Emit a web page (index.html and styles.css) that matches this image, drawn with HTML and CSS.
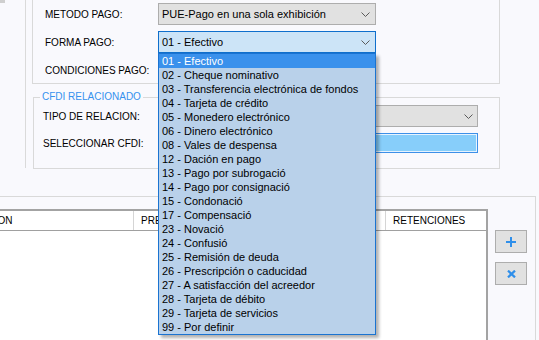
FILE: index.html
```html
<!DOCTYPE html>
<html lang="es">
<head>
<meta charset="utf-8">
<title>Forma de pago</title>
<link rel="stylesheet" href="styles.css">
</head>
<body>
<div class="screen">
  <div class="top">
    <div class="side"><div class="nub"></div></div>
    <div class="main">
      <div class="pago-panel">
        <div class="row">
          <span class="lbl">METODO PAGO:</span>
          <div class="combo"><span>PUE-Pago en una sola exhibición</span><svg class="chev" width="9" height="5" viewBox="0 0 9 5"><path d="M0.5 0.5L4.5 4.5L8.5 0.5" fill="none" stroke="#5a5a5a" stroke-width="1"/></svg></div>
        </div>
        <div class="row">
          <span class="lbl">FORMA PAGO:</span>
          <div class="combo focus"><span>01 - Efectivo</span><svg class="chev" width="9" height="5" viewBox="0 0 9 5"><path d="M0.5 0.5L4.5 4.5L8.5 0.5" fill="none" stroke="#5a5a5a" stroke-width="1"/></svg></div>
        </div>
        <div class="row">
          <span class="lbl">CONDICIONES PAGO:</span>
        </div>
      </div>
      <fieldset class="group">
        <legend>CFDI RELACIONADO</legend>
        <div class="grow">
          <span class="lbl2">TIPO DE RELACION:</span>
          <div class="combo wide"><span></span><svg class="chev" width="9" height="5" viewBox="0 0 9 5"><path d="M0.5 0.5L4.5 4.5L8.5 0.5" fill="none" stroke="#5a5a5a" stroke-width="1"/></svg></div>
        </div>
        <div class="grow">
          <span class="lbl2">SELECCIONAR CFDI:</span>
          <div class="cfdi"></div>
        </div>
      </fieldset>
    </div>
  </div>
  <div class="bottom">
    <div class="grid">
      <div class="ghead">
        <div class="th">DESCRIPCION</div>
        <div class="th">PRE</div>
        <div class="th"></div>
        <div class="th">RETENCIONES</div>
      </div>
    </div>
    <div class="btns">
      <button class="btn" type="button"><svg width="10" height="10" viewBox="0 0 10 10"><path d="M5 0V10M0 5H10" stroke="#2f8fea" stroke-width="2"/></svg></button>
      <button class="btn" type="button"><svg width="9" height="8" viewBox="0 0 9 8"><path d="M1 0.6L8 7.4M8 0.6L1 7.4" stroke="#2f8fea" stroke-width="2.2"/></svg></button>
    </div>
  </div>
  <ul class="droplist">
    <li class="sel">01 - Efectivo</li>
    <li>02 - Cheque nominativo</li>
    <li>03 - Transferencia electrónica de fondos</li>
    <li>04 - Tarjeta de crédito</li>
    <li>05 - Monedero electrónico</li>
    <li>06 - Dinero electrónico</li>
    <li>08 - Vales de despensa</li>
    <li>12 - Dación en pago</li>
    <li>13 - Pago por subrogació</li>
    <li>14 - Pago por consignació</li>
    <li>15 - Condonació</li>
    <li>17 - Compensació</li>
    <li>23 - Novació</li>
    <li>24 - Confusió</li>
    <li>25 - Remisión de deuda</li>
    <li>26 - Prescripción o caducidad</li>
    <li>27 - A satisfacción del acreedor</li>
    <li>28 - Tarjeta de débito</li>
    <li>29 - Tarjeta de servicios</li>
    <li>99 - Por definir</li>
  </ul>
</div>
</body>
</html>
```

FILE: styles.css
```css
* { box-sizing: border-box; }
body {
  margin: 0;
  background: #f9f9fd;
  font-family: "Liberation Sans", Arial, sans-serif;
  color: #000;
}
.screen {
  position: relative;
  width: 539px;
  height: 340px;
  overflow: hidden;
  background: #f9f9fd;
}
.top {
  display: flex;
  height: 196px;
}
.side {
  flex: none;
  width: 26px;
  height: 168px;
  border-right: 1px solid #dadada;
}
.nub {
  width: 5px;
  height: 3px;
  background: #cfcfcf;
}
.main {
  flex: none;
  padding-left: 6px;
  width: 474px;
}
.pago-panel {
  width: 468px;
  height: 84px;
  border: 1px solid #d9d9d9;
  border-top: none;
  padding: 3px 0 0 12px;
}
.row {
  display: flex;
  align-items: center;
  height: 22px;
  margin-bottom: 6px;
}
.lbl {
  flex: none;
  width: 113px;
  font-size: 10px;
}
.combo {
  flex: none;
  width: 218px;
  height: 22px;
  border: 1px solid #adadad;
  background: #e1e1e1;
  font-size: 11px;
  padding: 0 5px 0 3px;
  display: flex;
  align-items: center;
  justify-content: space-between;
  white-space: nowrap;
}
.combo.focus {
  border-color: #0f6fcc;
  background: #cce4f7;
}
.combo.wide {
  width: 320px;
  padding-right: 4px;
}
.chev { flex: none; display: block; }
.group {
  margin: 7px 0 0 1px;
  width: 467px;
  border: 1px solid #d9d9d9;
  padding: 2px 0 15px 6px;
}
.group legend {
  font-size: 10px;
  line-height: 12px;
  color: #3591ee;
  padding: 0 2px;
}
.grow {
  display: flex;
  align-items: center;
  margin-bottom: 6px;
}
.grow:last-child { margin-bottom: 0; }
.lbl2 {
  flex: none;
  width: 118px;
  padding-left: 3px;
  font-size: 10px;
}
.cfdi {
  flex: none;
  width: 320px;
  height: 20px;
  border: 1px solid #3d90e8;
  background: #87cefa;
  box-shadow: inset 0 0 0 1px #e6f3ff;
}
.bottom {
  display: flex;
  width: 536px;
  height: 144px;
  border-top: 1px solid #d9d9d9;
  border-right: 1px solid #d9d9d9;
  padding-top: 12px;
}
.grid {
  flex: none;
  width: 552px;
  margin-left: -64px;
  background: #fff;
  border-top: 2px solid #a3a3a3;
  border-right: 2px solid #a3a3a3;
}
.ghead {
  display: grid;
  grid-template-columns: 198px 120px 132px 100px;
  height: 20px;
  border-bottom: 1px solid #a0a0a0;
}
.th {
  font-size: 10px;
  padding-left: 7px;
  border-right: 1px solid #d5d5d5;
  display: flex;
  align-items: center;
  white-space: nowrap;
  overflow: hidden;
}
.th:last-child { border-right: none; }
.btns {
  flex: none;
  margin-left: 7px;
  padding-top: 21px;
  display: flex;
  flex-direction: column;
  gap: 9px;
}
.btn {
  width: 32px;
  height: 23px;
  border: 1px solid #adadad;
  background: #e1e1e1;
  padding: 0;
  display: flex;
  align-items: center;
  justify-content: center;
}
.btn svg { display: block; }
.droplist {
  position: absolute;
  left: 158px;
  top: 53px;
  width: 218px;
  margin: 0;
  padding: 0;
  list-style: none;
  background: #b9d1ea;
  border: 1px solid #1a73d1;
  box-shadow: 3px 3px 3px rgba(0, 0, 0, 0.3);
  font-size: 11px;
}
.droplist li {
  height: 14px;
  line-height: 14px;
  padding-left: 3px;
  white-space: nowrap;
}
.droplist li.sel {
  background: #3a91ec;
  color: #fff;
}
```
